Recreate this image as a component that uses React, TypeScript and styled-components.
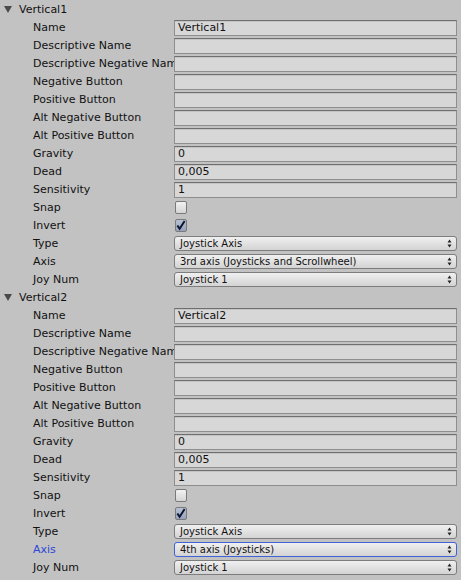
import styled, { createGlobalStyle } from 'styled-components';

const GlobalStyle = createGlobalStyle`
  html, body {
    margin: 0;
    padding: 0;
    background: #c2c2c2;
  }
  body {
    font-family: "DejaVu Sans", Verdana, sans-serif;
    font-size: 11px;
    color: #111;
  }
`;

const Panel = styled.div`
  width: 461px;
  height: 580px;
  background: #c2c2c2;
  overflow: hidden;
`;

const Header = styled.div`
  display: flex;
  align-items: center;
  height: 18px;
  padding-left: 4px;
`;

const Foldout = styled.span`
  width: 0;
  height: 0;
  border-left: 4px solid transparent;
  border-right: 4px solid transparent;
  border-top: 7px solid #4a4a4a;
  margin-right: 7px;
  margin-top: 1px;
`;

const Row = styled.div`
  display: flex;
  align-items: center;
  height: 18px;
`;

const Label = styled.div<{ $focused?: boolean }>`
  width: 141px;
  padding-left: 33px;
  flex-shrink: 0;
  white-space: nowrap;
  overflow: hidden;
  color: ${(p) => (p.$focused ? '#2b47d6' : '#111')};
`;

const TextField = styled.div`
  box-sizing: border-box;
  width: 283px;
  height: 16px;
  margin-top: 1px;
  padding: 0 3px;
  line-height: 14px;
  background: #d7d7d7;
  border: 1px solid #8e8e8e;
  border-top-color: #6f6f6f;
  box-shadow: inset 0 1px 0 #c4c4c4;
  white-space: nowrap;
`;

const CheckBox = styled.div<{ $checked?: boolean }>`
  box-sizing: border-box;
  width: 12px;
  height: 13px;
  margin-left: 1px;
  border: 1px solid #7a7a7a;
  border-radius: 2px;
  background: ${(p) =>
    p.$checked
      ? 'linear-gradient(#b7c1d3, #97a3ba)'
      : 'linear-gradient(#f2f2f2, #d4d4d4)'};
  display: flex;
  align-items: center;
  justify-content: center;
`;

const Popup = styled.div<{ $focused?: boolean }>`
  box-sizing: border-box;
  display: flex;
  align-items: center;
  justify-content: space-between;
  width: 283px;
  height: 15px;
  margin-top: 1px;
  padding: 0 4px 0 5px;
  border: 1px solid ${(p) => (p.$focused ? '#3f62d6' : '#7d7d7d')};
  border-radius: 3px;
  background: linear-gradient(#f0f0f0, #d3d3d3);
  font-size: 10px;
  white-space: nowrap;
`;

const Arrows = styled.svg`
  flex-shrink: 0;
`;

const Check = () => (
  <svg width="11" height="11" viewBox="0 0 11 11">
    <path d="M1.5 5.5 L4 9 L9.5 0.5" fill="none" stroke="#0d1530" strokeWidth="2.2" />
  </svg>
);

type Field =
  | { label: string; kind: 'text'; value?: string }
  | { label: string; kind: 'check'; checked: boolean }
  | { label: string; kind: 'popup'; value: string; focused?: boolean };

const buildFields = (name: string, axis: string, focused: boolean): Field[] => [
  { label: 'Name', kind: 'text', value: name },
  { label: 'Descriptive Name', kind: 'text' },
  { label: 'Descriptive Negative Name', kind: 'text' },
  { label: 'Negative Button', kind: 'text' },
  { label: 'Positive Button', kind: 'text' },
  { label: 'Alt Negative Button', kind: 'text' },
  { label: 'Alt Positive Button', kind: 'text' },
  { label: 'Gravity', kind: 'text', value: '0' },
  { label: 'Dead', kind: 'text', value: '0,005' },
  { label: 'Sensitivity', kind: 'text', value: '1' },
  { label: 'Snap', kind: 'check', checked: false },
  { label: 'Invert', kind: 'check', checked: true },
  { label: 'Type', kind: 'popup', value: 'Joystick Axis' },
  { label: 'Axis', kind: 'popup', value: axis, focused },
  { label: 'Joy Num', kind: 'popup', value: 'Joystick 1' },
];

const axes = [
  { name: 'Vertical1', axis: '3rd axis (Joysticks and Scrollwheel)', focused: false },
  { name: 'Vertical2', axis: '4th axis (Joysticks)', focused: true },
];

const renderControl = (f: Field) => {
  if (f.kind === 'text') return <TextField>{f.value}</TextField>;
  if (f.kind === 'check')
    return <CheckBox $checked={f.checked}>{f.checked && <Check />}</CheckBox>;
  return (
    <Popup $focused={f.focused}>
      <span>{f.value}</span>
      <Arrows width="5" height="9" viewBox="0 0 5 9">
        <path d="M2.5 0.5 L4.5 3.5 L0.5 3.5 Z M0.5 5.5 L4.5 5.5 L2.5 8.5 Z" fill="#222" />
      </Arrows>
    </Popup>
  );
};

export default function App() {
  return (
    <>
      <GlobalStyle />
      <Panel>
        {axes.map((a) => (
          <div key={a.name}>
            <Header>
              <Foldout />
              {a.name}
            </Header>
            {buildFields(a.name, a.axis, a.focused).map((f) => (
              <Row key={f.label}>
                <Label $focused={f.kind === 'popup' && f.focused}>{f.label}</Label>
                {renderControl(f)}
              </Row>
            ))}
          </div>
        ))}
      </Panel>
    </>
  );
}
